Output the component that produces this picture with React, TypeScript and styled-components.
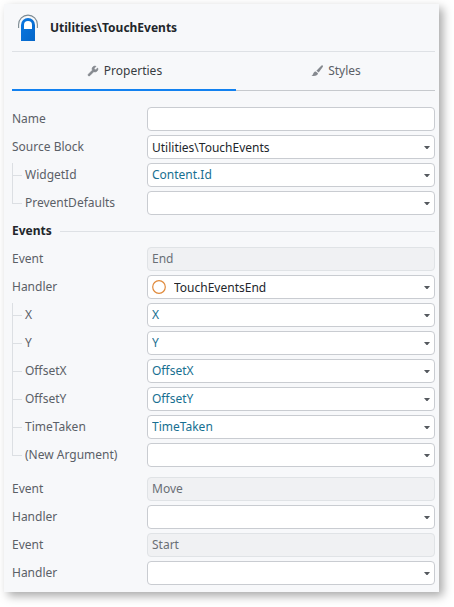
import React, { useId, useState } from "react";
import styled, { createGlobalStyle } from "styled-components";
import { Wrench } from "lucide-react";

const GlobalStyle = createGlobalStyle`
  *, *::before, *::after { box-sizing: border-box; }
  body {
    margin: 0;
    background: #ffffff;
    font-family: "Noto Sans", "Open Sans", sans-serif;
    font-size: 12px;
    line-height: 16px;
    color: #5b6067;
  }
  button, input, select { font: inherit; }
`;

const Panel = styled.main`
  margin: 4px 15px 15px 4px;
  padding: 0 4px 3px 8px;
  background: #f7f8fa;
  box-shadow: 4px 4px 9px rgba(0, 0, 0, 0.34);
`;

const Header = styled.header`
  display: flex;
  align-items: center;
  gap: 6px;
  height: 48px;
  padding-left: 6px;
  border-bottom: 1px solid #dee1e5;
`;

const BlockIcon = styled.svg`
  width: 20px;
  height: 28px;
  flex: none;
`;

const Title = styled.h1`
  margin: 0;
  padding-left: 6px;
  font-size: 12px;
  line-height: 16px;
  font-weight: 700;
  color: #22262b;
`;

const Tabs = styled.div`
  display: grid;
  grid-template-columns: 224px 1fr;
  height: 39px;
  margin-bottom: 16px;
`;

const Tab = styled.button<{ $active: boolean }>`
  display: flex;
  align-items: center;
  justify-content: center;
  gap: 5px;
  padding: 0 0 1px 1px;
  border: 0;
  background: ${(p) =>
    p.$active
      ? "linear-gradient(#1281f0, #1281f0) bottom / 100% 2px no-repeat"
      : "linear-gradient(#c6c9cd, #c6c9cd) bottom / 100% 1px no-repeat"};
  color: ${(p) => (p.$active ? "#373c42" : "#5b6067")};
  cursor: pointer;

  svg {
    width: 12px;
    height: 12px;
    color: #85898f;
  }
`;

const Group = styled.section`
  display: flex;
  flex-direction: column;

  & + & {
    margin-top: 6px;
  }
`;

const Row = styled.div`
  display: grid;
  grid-template-columns: 135px 1fr;
  height: 28px;
`;

const Label = styled.label`
  line-height: 23px;
  white-space: nowrap;
`;

const TreeLabel = styled(Label)<{ $last: boolean }>`
  padding-left: 13px;
  background:
    linear-gradient(#dcdfe3, #dcdfe3) 0 0 / 1px ${(p) => (p.$last ? "13px" : "100%")} no-repeat,
    linear-gradient(#dcdfe3, #dcdfe3) 0 12px / 10px 1px no-repeat;
`;

const TextBox = styled.input`
  width: 100%;
  min-width: 0;
  height: 24px;
  padding: 0 4px 2px;
  border: 1px solid #c9ccd1;
  border-radius: 4px;
  background: #ffffff;
  color: #22262b;

  &:read-only {
    border-color: #e0e3e6;
    background: #f0f1f3;
    color: #6a6f76;
  }
`;

const SelectWrap = styled.div`
  display: grid;
  align-items: center;
  height: 24px;

  > * {
    grid-area: 1 / 1;
  }
`;

const Select = styled.select<{ $expression: boolean; $icon: boolean }>`
  appearance: none;
  width: 100%;
  height: 24px;
  padding: ${(p) => (p.$expression ? "0" : "2px")} 18px 0 ${(p) => (p.$icon ? "26px" : "4px")};
  border: 1px solid #c9ccd1;
  border-radius: 4px;
  background: #ffffff;
  color: ${(p) => (p.$expression ? "#176f91" : "#22262b")};
`;

const Arrow = styled.svg`
  justify-self: end;
  width: 6px;
  height: 3px;
  margin: 1px 5px 0 0;
  pointer-events: none;
`;

const Ring = styled.svg`
  width: 14px;
  height: 14px;
  margin-left: 5px;
  pointer-events: none;
`;

const SectionTitle = styled.h2`
  display: flex;
  align-items: center;
  gap: 8px;
  height: 28px;
  margin: 0;
  padding-bottom: 4px;
  font-size: 12px;
  line-height: 16px;
  font-weight: 700;
  color: #22262b;

  &::after {
    content: "";
    flex: 1;
    height: 1px;
    background: #dee1e5;
  }
`;

type Kind = "text" | "readonly" | "select" | "expression" | "action";

interface FieldProps {
  label: string;
  kind: Kind;
  value?: string;
  branch?: "middle" | "last";
}

function Field({ label, kind, value = "", branch }: FieldProps) {
  const id = useId();
  const isInput = kind === "text" || kind === "readonly";
  return (
    <Row>
      {branch ? (
        <TreeLabel htmlFor={id} $last={branch === "last"}>{label}</TreeLabel>
      ) : (
        <Label htmlFor={id}>{label}</Label>
      )}
      {isInput ? (
        <TextBox id={id} defaultValue={value} readOnly={kind === "readonly"} />
      ) : (
        <SelectWrap>
          <Select id={id} defaultValue={value} $expression={kind === "expression"} $icon={kind === "action"}>
            <option value={value}>{value}</option>
          </Select>
          {kind === "action" && (
            <Ring viewBox="0 0 14 14" aria-hidden="true">
              <circle cx="7" cy="7" r="6.3" fill="none" stroke="#e08a3c" strokeWidth="1.2" />
            </Ring>
          )}
          <Arrow viewBox="0 0 6 3" aria-hidden="true">
            <path d="M0 0h6L3.5 3h-1z" fill="#55595f" />
          </Arrow>
        </SelectWrap>
      )}
    </Row>
  );
}

function Brush() {
  return (
    <svg viewBox="0 0 12 12" fill="currentColor" aria-hidden="true">
      <path d="M11.6.5c.5.4.4 1 .1 1.500L7.700 7.600 5.400 5.800 10 .9c.5-.5 1.100-.8 1.600-.4z" />
      <path d="M4.700 6.500 7 8.300c-.3 2.200-3 3.400-6.600 2.400 1.600-.5 1.600-1.400 2.100-2.600.4-1 1.200-1.600 2.200-1.600z" />
    </svg>
  );
}

const blockFields: FieldProps[] = [
  { label: "Name", kind: "text" },
  { label: "Source Block", kind: "select", value: "Utilities\\TouchEvents" },
  { label: "WidgetId", kind: "expression", value: "Content.Id", branch: "middle" },
  { label: "PreventDefaults", kind: "expression", branch: "last" },
];

const endFields: FieldProps[] = [
  { label: "Event", kind: "readonly", value: "End" },
  { label: "Handler", kind: "action", value: "TouchEventsEnd" },
  { label: "X", kind: "expression", value: "X", branch: "middle" },
  { label: "Y", kind: "expression", value: "Y", branch: "middle" },
  { label: "OffsetX", kind: "expression", value: "OffsetX", branch: "middle" },
  { label: "OffsetY", kind: "expression", value: "OffsetY", branch: "middle" },
  { label: "TimeTaken", kind: "expression", value: "TimeTaken", branch: "middle" },
  { label: "(New Argument)", kind: "expression", branch: "last" },
];

const otherFields: FieldProps[] = [
  { label: "Event", kind: "readonly", value: "Move" },
  { label: "Handler", kind: "select" },
  { label: "Event", kind: "readonly", value: "Start" },
  { label: "Handler", kind: "select" },
];

const renderFields = (fields: FieldProps[]) => fields.map((f, i) => <Field key={i} {...f} />);

export default function App() {
  const [tab, setTab] = useState<"properties" | "styles">("properties");
  return (
    <>
      <GlobalStyle />
      <Panel>
        <Header>
          <BlockIcon viewBox="0 0 20 28" aria-hidden="true">
            <defs>
              <linearGradient id="finger" x1="0" y1="0" x2="1" y2="1">
                <stop offset="0" stopColor="#0a78e2" />
                <stop offset="1" stopColor="#0566c8" />
              </linearGradient>
            </defs>
            <path d="M.6 14v-3.500a9.400 9.400 0 0 1 18.800 0V14" fill="none" stroke="#7d8b93" strokeWidth="1.100" />
            <path d="M3 27V11a7 7 0 0 1 14 0v16z" fill="url(#finger)" />
            <path d="M6 15v-4a4 4 0 0 1 8 0v4z" fill="#ffffff" />
          </BlockIcon>
          <Title>Utilities\TouchEvents</Title>
        </Header>
        <Tabs role="tablist">
          <Tab role="tab" aria-selected={tab === "properties"} $active={tab === "properties"} onClick={() => setTab("properties")}>
            <Wrench fill="currentColor" strokeWidth={1} aria-hidden="true" />
            Properties
          </Tab>
          <Tab role="tab" aria-selected={tab === "styles"} $active={tab === "styles"} onClick={() => setTab("styles")}>
            <Brush />
            Styles
          </Tab>
        </Tabs>
        <Group>{renderFields(blockFields)}</Group>
        <SectionTitle>Events</SectionTitle>
        <Group>{renderFields(endFields)}</Group>
        <Group>{renderFields(otherFields)}</Group>
      </Panel>
    </>
  );
}
